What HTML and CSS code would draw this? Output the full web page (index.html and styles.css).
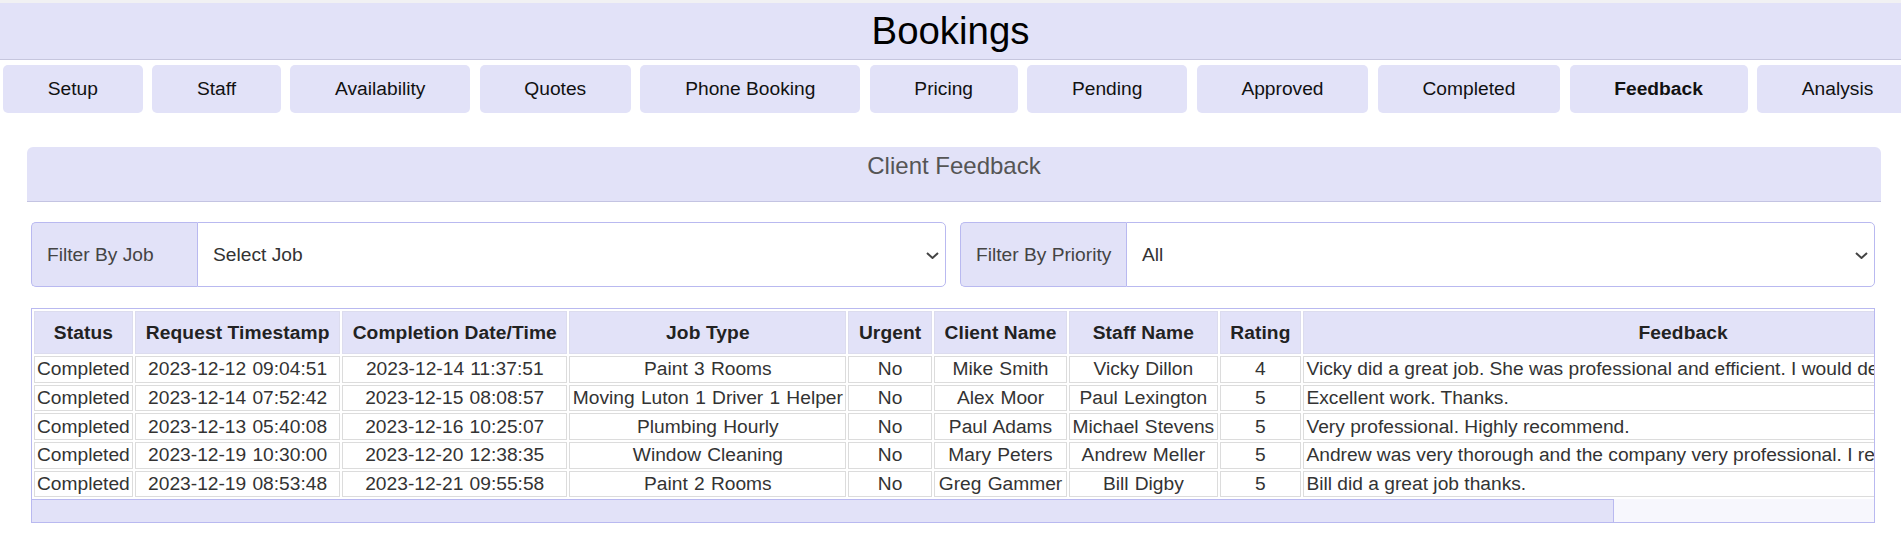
FILE: index.html
```html
<!DOCTYPE html>
<html lang="en">
<head>
<meta charset="utf-8">
<title>Bookings</title>
<link rel="stylesheet" href="styles.css">
</head>
<body>
<header class="page-header"><h1 class="page-title">Bookings</h1></header>
<nav class="tabs">
  <a class="tab">Setup</a>
  <a class="tab">Staff</a>
  <a class="tab">Availability</a>
  <a class="tab">Quotes</a>
  <a class="tab">Phone Booking</a>
  <a class="tab">Pricing</a>
  <a class="tab">Pending</a>
  <a class="tab">Approved</a>
  <a class="tab">Completed</a>
  <a class="tab tab-active">Feedback</a>
  <a class="tab">Analysis</a>
</nav>
<main class="panel">
  <div class="panel-title">Client Feedback</div>
  <div class="filters">
    <div class="filter">
      <span class="filter-label">Filter By Job</span>
      <div class="filter-select"><span>Select Job</span><svg class="chevron" width="13" height="7" viewBox="0 0 13 7"><polyline points="1,1 6.5,6 12,1" fill="none" stroke="#444" stroke-width="2"/></svg></div>
    </div>
    <div class="filter">
      <span class="filter-label">Filter By Priority</span>
      <div class="filter-select"><span>All</span><svg class="chevron" width="13" height="7" viewBox="0 0 13 7"><polyline points="1,1 6.5,6 12,1" fill="none" stroke="#444" stroke-width="2"/></svg></div>
    </div>
  </div>
  <div class="table-wrap">
    <div class="table-viewport">
      <table class="feedback-table">
        <thead>
          <tr>
            <th>Status</th>
            <th>Request Timestamp</th>
            <th>Completion Date/Time</th>
            <th>Job Type</th>
            <th>Urgent</th>
            <th>Client Name</th>
            <th>Staff Name</th>
            <th>Rating</th>
            <th class="col-feedback">Feedback</th>
          </tr>
        </thead>
        <tbody>
          <tr><td>Completed</td><td>2023-12-12 09:04:51</td><td>2023-12-14 11:37:51</td><td>Paint 3 Rooms</td><td>No</td><td>Mike Smith</td><td>Vicky Dillon</td><td>4</td><td class="feedback-text">Vicky did a great job. She was professional and efficient. I would definitely use her again.</td></tr>
          <tr><td>Completed</td><td>2023-12-14 07:52:42</td><td>2023-12-15 08:08:57</td><td>Moving Luton 1 Driver 1 Helper</td><td>No</td><td>Alex Moor</td><td>Paul Lexington</td><td>5</td><td class="feedback-text">Excellent work. Thanks.</td></tr>
          <tr><td>Completed</td><td>2023-12-13 05:40:08</td><td>2023-12-16 10:25:07</td><td>Plumbing Hourly</td><td>No</td><td>Paul Adams</td><td>Michael Stevens</td><td>5</td><td class="feedback-text">Very professional. Highly recommend.</td></tr>
          <tr><td>Completed</td><td>2023-12-19 10:30:00</td><td>2023-12-20 12:38:35</td><td>Window Cleaning</td><td>No</td><td>Mary Peters</td><td>Andrew Meller</td><td>5</td><td class="feedback-text">Andrew was very thorough and the company very professional. I recommend them.</td></tr>
          <tr><td>Completed</td><td>2023-12-19 08:53:48</td><td>2023-12-21 09:55:58</td><td>Paint 2 Rooms</td><td>No</td><td>Greg Gammer</td><td>Bill Digby</td><td>5</td><td class="feedback-text">Bill did a great job thanks.</td></tr>
        </tbody>
      </table>
    </div>
    <div class="scrollbar"><div class="scrollbar-thumb"></div></div>
  </div>
</main>
</body>
</html>
```
FILE: styles.css
```css
html, body {
  margin: 0;
  padding: 0;
  background: #ffffff;
  overflow: hidden;
}
body {
  font-family: "Liberation Sans", Arial, sans-serif;
  font-size: 19.2px;
  color: #111;
  width: 1901px;
}
.page-header {
  border-top: 3px solid #f1f1f3;
  background: #e2e2f8;
  border-bottom: 1px solid #c6c6de;
  height: 60px;
  box-sizing: border-box;
}
.page-title {
  margin: 0;
  font-size: 38.4px;
  font-weight: normal;
  line-height: 56px;
  text-align: center;
  color: #000;
}
.tabs {
  display: flex;
  flex-wrap: nowrap;
  gap: 9.4px;
  padding-left: 3px;
  margin-top: 5px;
  overflow: hidden;
  white-space: nowrap;
}
.tab {
  flex: 0 0 auto;
  height: 48px;
  line-height: 48px;
  padding: 0 44.8px;
  background: #e2e2f8;
  border-radius: 5px;
  color: #111;
  text-align: center;
}
.tab-active {
  font-weight: bold;
}
.panel {
  margin: 34px 0 0 27px;
  width: 1854px;
}
.panel-title {
  background: #e2e2f8;
  border-bottom: 1px solid #c4c4e2;
  border-radius: 6px 6px 0 0;
  height: 55px;
  box-sizing: border-box;
  padding-top: 5px;
  font-size: 24px;
  line-height: 27.6px;
  text-align: center;
  color: #555;
}
.filters {
  display: grid;
  grid-template-columns: 1fr 1fr;
  gap: 13.5px;
  margin: 20px 6px 0 3.6px;
}
.filter {
  display: flex;
  height: 65px;
}
.filter-label {
  flex: 0 0 166px;
  box-sizing: border-box;
  display: flex;
  align-items: center;
  padding: 0 14px 0 15.4px;
  background: #e2e2f8;
  border: 1px solid #b9b9f0;
  border-right: none;
  border-radius: 5px 0 0 5px;
  color: #444;
  white-space: nowrap;
}
.filter-select {
  flex: 1 1 auto;
  display: flex;
  align-items: center;
  justify-content: space-between;
  padding: 0 6px 0 15.4px;
  background: #fff;
  border: 1px solid #b9b9f0;
  border-radius: 0 5px 5px 0;
  color: #333;
}
.chevron {
  display: block;
  margin-top: 2px;
}
.table-wrap {
  margin: 21px 6px 0 3.6px;
  border: 1px solid #b9b9f0;
}
.table-viewport {
  overflow: hidden;
}
.scrollbar {
  height: 22.4px;
  background: #f7f7fd;
  display: flex;
}
.scrollbar-thumb {
  width: 85.9%;
  box-sizing: border-box;
  background: #e2e2f8;
  border: 1px solid #b9b9f0;
  border-left: none;
  border-bottom: none;
}
.feedback-table {
  border-collapse: separate;
  border-spacing: 2px 2.2px;
  white-space: nowrap;
  color: #333;
}
.feedback-table th {
  background: #e2e2f8;
  border: 1px solid #dcdcee;
  padding: 9.6px;
  line-height: 22px;
  font-weight: bold;
  color: #222;
  text-align: center;
  letter-spacing: 0.1px;
}
.feedback-table td {
  border: 1px solid #dcdcdc;
  padding: 1.3px 2.4px;
  line-height: 22px;
  text-align: center;
  word-spacing: 0.9px;
}
.feedback-table th.col-feedback {
  width: 847px;
}
.feedback-table td.feedback-text {
  text-align: left;
  word-spacing: 0;
}
```
